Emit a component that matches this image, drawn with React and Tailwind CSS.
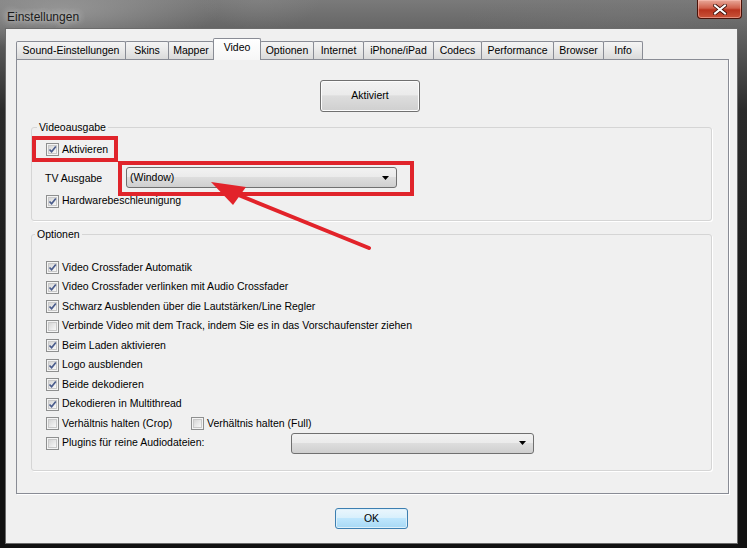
import React from "react";

const tabs = [
  { label: "Sound-Einstellungen", w: "w-[110px]" },
  { label: "Skins", w: "w-[44px]" },
  { label: "Mapper", w: "w-[46px]" },
  { label: "Video", w: "w-[48px]", active: true },
  { label: "Optionen", w: "w-[54px]" },
  { label: "Internet", w: "w-[51px]" },
  { label: "iPhone/iPad", w: "w-[71px]" },
  { label: "Codecs", w: "w-[49px]" },
  { label: "Performance", w: "w-[73px]" },
  { label: "Browser", w: "w-[51px]" },
  { label: "Info", w: "w-[40px]" },
];

const options = [
  { label: "Video Crossfader Automatik", checked: true },
  { label: "Video Crossfader verlinken mit Audio Crossfader", checked: true },
  { label: "Schwarz Ausblenden über die Lautstärken/Line Regler", checked: true },
  { label: "Verbinde Video mit dem Track, indem Sie es in das Vorschaufenster ziehen", checked: false },
  { label: "Beim Laden aktivieren", checked: true },
  { label: "Logo ausblenden", checked: true },
  { label: "Beide dekodieren", checked: true },
  { label: "Dekodieren in Multithread", checked: true },
];

function CheckBox({ checked }) {
  return (
    <span className="w-[13px] h-[13px] shrink-0 border border-[#8e8f8f] bg-[#f4f4f4] p-px">
      <span className="block w-full h-full bg-[linear-gradient(135deg,#d6d6d6,#f8f8f8)] border border-[#c9c9c9]">
        {checked && (
          <svg viewBox="0 0 9 9" className="w-[9px] h-[9px] -ml-px -mt-px">
            <path d="M1.5 4.5 L3.6 6.8 L7.8 1.5" fill="none" stroke="#4a5c8c" strokeWidth="1.7" />
          </svg>
        )}
      </span>
    </span>
  );
}

function CheckRow({ label, checked }) {
  return (
    <label className="flex items-center gap-[3px] cursor-default">
      <CheckBox checked={checked} />
      <span>{label}</span>
    </label>
  );
}

function DropDown({ value, className }) {
  return (
    <div
      className={`flex items-center justify-between h-[21px] rounded-[3px] border border-[#707070] bg-[linear-gradient(#f2f2f2,#ebebeb_45%,#dddddd_50%,#cfcfcf)] pl-[3px] pr-[7px] ${className}`}
    >
      <span>{value}</span>
      <svg viewBox="0 0 7 4" className="w-[7px] h-[4px]">
        <path d="M0 0 H7 L3.5 4 Z" fill="#000" />
      </svg>
    </div>
  );
}

export default function App() {
  return (
    <div className="relative w-[747px] h-[548px] overflow-hidden bg-[linear-gradient(90deg,#3c3c3c,#222_40%,#181818_70%,#2e2e2e)] font-['Liberation_Sans',Arial,sans-serif] text-[10.5px] text-black">
      {/* glass highlights of the frame */}
      <div className="absolute inset-0 bg-[radial-gradient(ellipse_160px_40px_at_60px_10px,rgba(160,160,160,0.75),transparent),radial-gradient(ellipse_60px_30px_at_260px_0px,rgba(140,140,140,0.35),transparent),radial-gradient(ellipse_160px_30px_at_620px_14px,rgba(120,120,120,0.35),transparent),linear-gradient(#7a7a7a,#2b2b2b_20%,#111_70%)]" />

      <div className="relative flex flex-col h-full">
        {/* title bar */}
        <div className="flex justify-between items-start h-[28px]">
          <span className="pl-[7px] pt-[8px] text-[12px] text-[#1a1a1a] [text-shadow:0_0_6px_#ddd,0_0_10px_#bbb]">
            Einstellungen
          </span>
          <button className="mr-[5px] w-[45px] h-[19px] flex items-center justify-center rounded-b-[4px] border border-t-0 border-[#4a1208] bg-[linear-gradient(#e9a99a,#d0604b_45%,#b8331e_55%,#c9543a)] shadow-[inset_0_0_0_1px_rgba(255,200,190,0.5)]">
            <svg viewBox="0 0 14 11" className="w-[14px] h-[11px]">
              <path d="M2 1.5 L12 9.5 M12 1.5 L2 9.5" stroke="#3a0d06" strokeWidth="3.6" strokeLinecap="square" />
              <path d="M2 1.5 L12 9.5 M12 1.5 L2 9.5" stroke="#fff" strokeWidth="2" strokeLinecap="square" />
            </svg>
          </button>
        </div>

        {/* client area */}
        <div className="ml-[5px] w-[733px] h-[516px] border border-[#6b6b6b] bg-[#f0f0f0] flex flex-col">
          {/* tab strip */}
          <div className="flex items-end pl-[10px] pt-[9px]">
            {tabs.map((t, i) =>
              t.active ? (
                <div
                  key={t.label}
                  className={`${t.w} -ml-px h-[22px] -mb-px relative z-10 border border-b-0 border-[#898c95] rounded-t-[2px] bg-[linear-gradient(#ffffff,#f6f6f6)] flex justify-center leading-[17px]`}
                >
                  {t.label}
                </div>
              ) : (
                <div
                  key={t.label}
                  className={`${t.w} ${i > 0 ? "-ml-px" : ""} h-[18px] border border-b-0 border-[#898c95] rounded-t-[2px] bg-[linear-gradient(#f4f4f4,#e9e9e9_50%,#dadada)] flex items-center justify-center`}
                >
                  {t.label}
                </div>
              )
            )}
          </div>

          {/* tab page */}
          <div className="ml-[10px] w-[713px] h-[435px] border border-[#898c95] bg-[#f0f0f0] shadow-[1px_1px_0_#fff] flex flex-col">
            <button className="mt-[20px] ml-[303px] w-[100px] h-[32px] rounded-[3px] border border-[#707070] bg-[linear-gradient(#f2f2f2,#ebebeb_45%,#dddddd_50%,#cfcfcf)] shadow-[inset_0_0_0_1px_#fcfcfc]">
              Aktiviert
            </button>

            <fieldset className="mt-[8px] ml-[14px] w-[681px] border border-[#d5d5d5] rounded-[3px] shadow-[1px_1px_0_#fff] pb-[12px]">
              <legend className="ml-[5px] px-[2px] leading-[14px]">Videoausgabe</legend>
              <div className="mt-[2px] flex items-center w-[86px] h-[26px] border-4 border-[#e0242b] pl-[10px] pt-px">
                <CheckRow label="Aktivieren" checked />
              </div>
              <div className="-mt-px flex items-center">
                <span className="w-[86px] pl-[13px]">TV Ausgabe</span>
                <div className="w-[296px] h-[35px] border-4 border-[#e0242b] pl-[4px] pt-[2px]">
                  <DropDown value="(Window)" className="w-[271px]" />
                </div>
              </div>
              <div className="-mt-[2px] ml-[14px] h-[14px] flex items-center">
                <CheckRow label="Hardwarebeschleunigung" checked />
              </div>
            </fieldset>

            <fieldset className="mt-[6px] ml-[14px] w-[681px] border border-[#d5d5d5] rounded-[3px] shadow-[1px_1px_0_#fff] pb-[17px]">
              <legend className="ml-[3px] px-[2px] leading-[14px]">Optionen</legend>
              <div className="mt-[17px] ml-[14px] flex flex-col">
                {options.map((o) => (
                  <div key={o.label} className="h-[19.5px] flex items-center">
                    <CheckRow label={o.label} checked={o.checked} />
                  </div>
                ))}
                <div className="h-[19.5px] flex items-center">
                  <div className="w-[145px]">
                    <CheckRow label="Verhältnis halten (Crop)" checked={false} />
                  </div>
                  <CheckRow label="Verhältnis halten (Full)" checked={false} />
                </div>
                <div className="h-[19.5px] flex items-center">
                  <div className="w-[245px]">
                    <CheckRow label="Plugins für reine Audiodateien:" checked={false} />
                  </div>
                  <DropDown value="" className="w-[243px]" />
                </div>
              </div>
            </fieldset>
          </div>

          <button className="mt-[14px] self-center w-[73px] h-[21px] rounded-[3px] border border-[#3c7fb1] bg-[linear-gradient(#eaf6fd,#d9f0fc_45%,#bee6fd_50%,#a7d9f5)] shadow-[inset_0_0_0_1px_#def0fa]">
            OK
          </button>
        </div>
      </div>

      {/* red annotation arrow */}
      <svg className="absolute inset-0 pointer-events-none" width="747" height="548" viewBox="0 0 747 548">
        <line x1="369" y1="248" x2="236" y2="194" stroke="#e2232a" strokeWidth="4" strokeLinecap="round" />
        <polygon points="211,182 246,187 233,205" fill="#e2232a" />
      </svg>
    </div>
  );
}
